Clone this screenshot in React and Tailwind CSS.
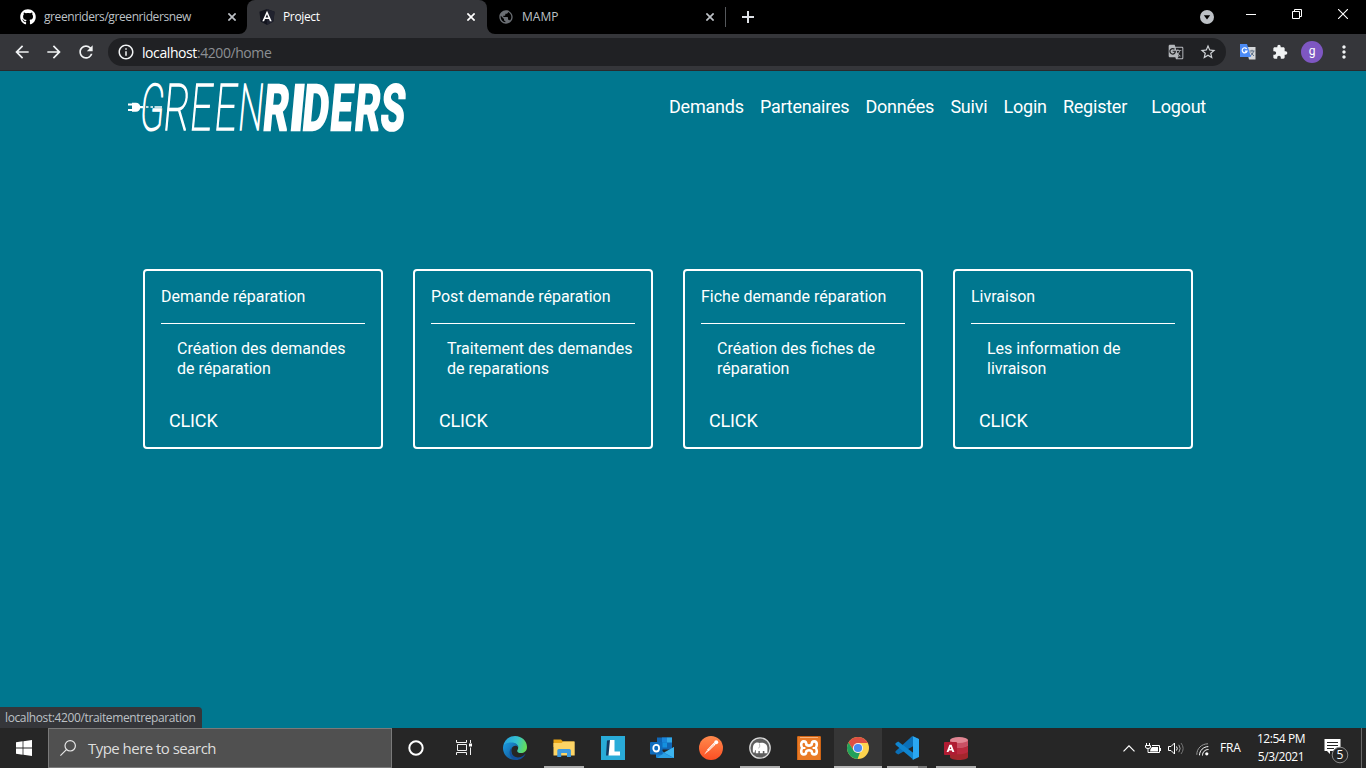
import React from "react";
import {
  MdArrowBack,
  MdArrowForward,
  MdRefresh,
  MdInfoOutline,
  MdStarBorder,
  MdExtension,
  MdMoreVert,
  MdPublic,
  MdGTranslate,
} from "react-icons/md";
import { FaGithub } from "react-icons/fa";

const navLinks = ["Demands", "Partenaires", "Données", "Suivi", "Login", "Register"];

const cards = [
  { title: "Demande réparation", lines: ["Création des demandes", "de réparation"] },
  { title: "Post demande réparation", lines: ["Traitement des demandes", "de reparations"] },
  { title: "Fiche demande réparation", lines: ["Création des fiches de", "réparation"] },
  { title: "Livraison", lines: ["Les information de", "livraison"] },
];

function Cross({ className }) {
  return (
    <svg className={className} width="8" height="8" viewBox="0 0 8 8" stroke="currentColor" strokeWidth="1.7">
      <path d="M0.4 0.4L7.6 7.6M7.6 0.4L0.4 7.6" />
    </svg>
  );
}

function AngularIcon() {
  return (
    <svg width="16" height="16" viewBox="0 0 16 16">
      <path d="M8 0L15.6 2.7L14.4 12.6L8 16L1.6 12.6L0.4 2.7Z" fill="#13151f" />
      <path d="M8 0L15.6 2.7L14.4 12.6L8 16Z" fill="#20222e" />
      <path fillRule="evenodd" d="M8 1.8L3.3 12.3H5.1L6 10H10L10.9 12.3H12.7ZM8 5.2L9.4 8.5H6.6Z" fill="#fff" />
    </svg>
  );
}

function TabStrip() {
  return (
    <div className="flex h-[34px] shrink-0 items-stretch bg-black text-[12px] text-[#bdc1c6]">
      <div className="flex w-[247px] items-center pl-5">
        <FaGithub className="size-4 text-white" />
        <span className="ml-2 w-[184px] tracking-[-0.41px]">greenriders/greenridersnew</span>
        <Cross />
      </div>
      <div className="relative flex w-[240px] items-center rounded-t-lg bg-[#35363a] pl-3 text-white">
        <svg className="absolute -left-2 bottom-0" width="8" height="8"><path d="M8 0V8H0A8 8 0 0 0 8 0" fill="#35363a" /></svg>
        <svg className="absolute -right-2 bottom-0" width="8" height="8"><path d="M0 0V8H8A8 8 0 0 1 0 0" fill="#35363a" /></svg>
        <AngularIcon />
        <span className="ml-2 w-[184px] tracking-[-0.35px]">Project</span>
        <Cross />
      </div>
      <div className="flex w-[238px] items-center pl-[11px]">
        <MdPublic className="size-4 text-[#6b6f74]" />
        <span className="ml-2 w-[184px] tracking-[0.05px]">MAMP</span>
        <Cross />
      </div>
      <div className="my-[7px] w-px bg-[#55585c]" />
      <div className="flex w-[44px] items-center pl-4">
        <svg width="12" height="12" viewBox="0 0 12 12" stroke="#dee1e6" strokeWidth="2"><path d="M6 0V12M0 6H12" /></svg>
      </div>
      <div className="ml-auto flex items-start">
        <svg className="mt-[10px]" width="14" height="14" viewBox="0 0 14 14">
          <circle cx="7" cy="7" r="7" fill="#bdc1c6" />
          <path d="M3.8 5.3H10.2L7 9.5Z" fill="#000" />
        </svg>
        <svg className="ml-8 mt-[9px]" width="10" height="11" stroke="#fff"><path d="M0 5.5H10" /></svg>
        <svg className="ml-9 mt-[9px]" width="10" height="10" fill="none" stroke="#fff">
          <path d="M0.5 2.5H7.5V9.5H0.5ZM2.5 2.5V0.5H9.5V7.5H7.5" />
        </svg>
        <svg className="ml-9 mr-[18px] mt-[9px]" width="10" height="10" stroke="#fff" strokeWidth="1.1"><path d="M0 0L10 10M10 0L0 10" /></svg>
      </div>
    </div>
  );
}

function Toolbar() {
  return (
    <div className="flex h-[37px] shrink-0 items-center border-b border-[#292a2d] bg-[#35363a] text-[#f1f3f4]">
      <MdArrowBack className="ml-3 size-5" />
      <MdArrowForward className="ml-3 size-5" />
      <MdRefresh className="ml-3 size-5" />
      <div className="ml-3 flex h-7 w-[1118px] items-center rounded-full bg-[#202124] pl-[9px] pr-[9px]">
        <MdInfoOutline className="size-[18px]" />
        <span className="ml-[7px] text-[14px] tracking-[-0.42px] text-white">
          localhost<span className="text-[#8c8f93]">:4200/home</span>
        </span>
        <MdGTranslate className="ml-auto size-4 text-[#b4b7bb]" />
        <MdStarBorder className="ml-[15px] size-[18px] text-[#d0d3d7]" />
      </div>
      <svg className="ml-[14px]" width="16" height="16" viewBox="0 0 16 16">
        <path d="M6 3H15.5V15.5H9Z" fill="#d5d7da" />
        <path d="M9.5 7H14.5M12 5.8V7M13.7 7.2Q12.8 10.5 10 12M10.8 8.5L14 12" stroke="#5c6f85" fill="none" />
        <path d="M0 0H7L11 13H0Z" fill="#4c8bf5" />
        <path d="M6.7 4.8A2.5 2.5 0 1 0 7 7.2H4.9" fill="none" stroke="#fff" strokeWidth="1.2" />
      </svg>
      <MdExtension className="ml-4 size-4" />
      <div className="ml-[13px] flex size-[22px] items-center justify-center rounded-full bg-[#7e57c2] font-['Roboto',sans-serif] text-[12px] leading-none text-white">
        <span className="-mt-[2px]">g</span>
      </div>
      <MdMoreVert className="ml-[11px] size-5" />
    </div>
  );
}

const thinLetters = [
  ["G", 140.6, 19.5],
  ["R", 165.7, 20],
  ["E", 192, 17.5],
  ["E", 216.5, 17.5],
  ["N", 240, 18.5],
];
const boldLetters = [
  ["R", 264, 22.5],
  ["I", 291.3, 7.6],
  ["D", 303.5, 22.5],
  ["E", 331, 19.3],
  ["R", 355.5, 22.5],
  ["S", 380.5, 21.5],
];
// Left bearing and ink width of each capital, in em.
const thinInk = { G: [0.063, 0.557], R: [0.093, 0.502], E: [0.093, 0.45], N: [0.093, 0.525] };
const boldInk = { R: [0.06, 0.57], I: [0.065, 0.145], D: [0.06, 0.555], E: [0.06, 0.49], S: [0.035, 0.55] };

function Letter({ ch, x, w, ink, size, baseline, ...rest }) {
  const sx = w / (ink[1] * size);
  const dx = x - 128 - ink[0] * size * sx;
  return (
    <text
      {...rest}
      fontSize={size}
      fill="#fff"
      stroke="#fff"
      transform={`translate(${dx} ${baseline}) skewX(-5.3) scale(${sx} 1)`}
    >
      {ch}
    </text>
  );
}

function Logo() {
  return (
    <svg width="300" height="84" viewBox="0 -16 300 84" className="-my-1.5 shrink-0 font-['Roboto',sans-serif]">
      <path d="M4 21.8H8Q11.5 22 12.2 25H15V27.2H12.2Q11.5 30.6 8 30.8H4ZM0 22.6H4V24.6H0ZM0 28H4V30H0Z" fill="#fff" />
      <path d="M18 26H20.5M22.5 26H25M26.5 26H34" stroke="#fff" strokeWidth="1.6" />
      {thinLetters.map(([ch, x, w], i) => (
        <Letter key={i} ch={ch} x={x} w={w} ink={thinInk[ch]} size={64.5} baseline={48.9} fontWeight="100" strokeWidth="1.7" />
      ))}
      {boldLetters.map(([ch, x, w], i) => (
        <Letter key={i} ch={ch} x={x} w={w} ink={boldInk[ch]} size={63.5} baseline={48.5} fontWeight="700" strokeWidth="2.4" />
      ))}
    </svg>
  );
}

function Page() {
  return (
    <main className="relative flex-1 bg-[#00778f] font-['Roboto',sans-serif] text-white">
      <header className="flex h-[72px] items-center pl-32 pr-[160px]">
        <Logo />
        <nav className="ml-auto flex gap-[16.2px] text-[18px] leading-6 tracking-[-0.23px]">
          {navLinks.map((n) => (
            <a key={n}>{n}</a>
          ))}
          <a className="ml-2">Logout</a>
        </nav>
      </header>
      <section className="mt-[126px] flex gap-[30px] pl-[143px]">
        {cards.map((c) => (
          <article key={c.title} className="flex h-[180px] w-60 flex-col rounded border-2 border-white px-4 pt-4 text-base leading-5">
            <h2 className="h-[37px] w-[204px] border-b border-white">{c.title}</h2>
            <p className="mt-[15px] whitespace-nowrap pl-4">
              {c.lines[0]}
              <br />
              {c.lines[1]}
            </p>
            <a className="mt-[30px] pl-2 text-[18px] leading-6 tracking-[-0.15px]">CLICK</a>
          </article>
        ))}
      </section>
      <div className="absolute bottom-0 left-0 flex h-[21px] w-[202px] items-center whitespace-nowrap rounded-tr bg-[#35363a] pl-[5px] font-['Open_Sans','Noto_Sans',sans-serif] text-[12px] tracking-[-0.38px] text-[#bdc1c6]">
        localhost:4200/traitementreparation
      </div>
    </main>
  );
}

function TaskItem({ children, active, line }) {
  return (
    <div className={active ? "flex w-12 flex-col bg-[#363636]" : "flex w-12 flex-col"}>
      <div className="flex h-[38px] items-center justify-center pt-[2px]">{children}</div>
      {line}
    </div>
  );
}

const underline = <div className="mx-1 h-[2px] bg-[#adadad]" />;

function Edge() {
  return (
    <svg width="24" height="24" viewBox="0 0 24 24">
      <defs>
        <linearGradient id="edgeTop" x1="0" y1="0.3" x2="1" y2="0.5"><stop stopColor="#249fe0" /><stop offset=".55" stopColor="#35c1cf" /><stop offset="1" stopColor="#66df55" /></linearGradient>
        <linearGradient id="edgeLow" x1="0" y1="0" x2="1" y2="1"><stop stopColor="#1b9de2" /><stop offset="1" stopColor="#114a8b" /></linearGradient>
      </defs>
      <path d="M0 11C1 4 6 0 12 0C19 0 24 5 24 11C24 15 21 17 18 17C15 17 13.5 15.5 14.5 14C16.5 11 14 7 9 7C4 7 1 9 0 11Z" fill="url(#edgeTop)" />
      <path d="M0 12C0 8 4 6.4 8.5 6.4C13 6.4 15.5 9 15.5 11.5C14 8.8 9.5 9.5 8.5 13C7.5 18 11 23 15.5 23.5C6 25.5 0 19 0 12Z" fill="url(#edgeLow)" />
      <path d="M9.5 11C6 15 9 21 15 21.5C19 21.5 21.5 18.5 22.8 17.5C20.5 22 17 24 13 24C8 23 5.5 18 7 14Q7.8 12 9.5 11Z" fill="#124f9c" />
    </svg>
  );
}

function Explorer() {
  return (
    <svg width="22" height="19" viewBox="0 0 22 19">
      <path d="M0.5 0.5H8L10 2.5H21V8H0.5Z" fill="#e8a416" />
      <path d="M0.5 4H8.5L10.3 2.5H21.7V16.5H0.5Z" fill="#fdd465" />
      <path d="M4.3 18V11.5Q4.3 10 5.8 10H16.4Q17.9 10 17.9 11.5V18H14V14H8.2V18Z" fill="#3d9ae0" />
    </svg>
  );
}

function LApp() {
  return (
    <svg width="24" height="24" viewBox="0 0 24 24">
      <rect width="24" height="24" fill="#29abd8" />
      <path d="M6 4.5L10 4V15L7.5 19.5H5Z" fill="#123a63" />
      <path d="M9 4H13.5V15.5H19V19.5H7.5Z" fill="#fff" />
    </svg>
  );
}

function Outlook() {
  return (
    <svg width="24" height="22" viewBox="0 0 24 22">
      <rect x="7" y="0.5" width="15" height="12" fill="#1066b5" />
      <rect x="12" y="0.5" width="5" height="5" fill="#1a85d9" />
      <rect x="17" y="0.5" width="5" height="5" fill="#32a9e7" />
      <rect x="12" y="5.5" width="5" height="5" fill="#1490df" />
      <path d="M6 10L15 16L24 10V20.5Q24 21 23 21H7Q6 21 6 20Z" fill="#1a83d3" />
      <path d="M24 10V21L14 15.4Z" fill="#3eb5ef" />
      <path d="M14 16L23 21H7Z" fill="#2ba0e3" />
      <rect y="5" width="12.5" height="12.5" rx="1" fill="#0f6cbd" />
      <ellipse cx="6.2" cy="11.2" rx="2.9" ry="3.3" fill="none" stroke="#fff" strokeWidth="1.8" />
    </svg>
  );
}

function Postman() {
  return (
    <svg width="24" height="24" viewBox="0 0 24 24">
      <defs>
        <linearGradient id="postman" x1="0" y1="0" x2="0" y2="1"><stop stopColor="#ff8a4d" /><stop offset="1" stopColor="#fb4f23" /></linearGradient>
      </defs>
      <circle cx="12" cy="12" r="12" fill="url(#postman)" />
      <circle cx="17.2" cy="6.2" r="2" fill="#fff" />
      <path d="M14.8 6.8L16.6 8.6L9.6 15.2L7.9 13.9Z" fill="#fff" />
      <path d="M8 14.2L9.4 15.3L5 18.7Z" fill="#ffe1d3" />
      <path d="M9.6 13.8L15 8.6" stroke="#ff8658" strokeWidth="0.7" />
    </svg>
  );
}

function Xampp() {
  return (
    <svg width="24" height="24" viewBox="0 0 24 24">
      <rect width="24" height="24" rx="1.5" fill="#e97a26" />
      <path d="M0.5 24V1.5Q0.5 0.5 1.5 0.5H22.5Q23.5 0.5 23.5 1.5V24" fill="none" stroke="#cf6415" />
      <path d="M3 1.5H21" stroke="#f7b27c" />
      <path
        d="M5.6 12Q4.2 11 4.2 8.6Q4.2 5.4 6.8 5.4Q9.2 5.4 9.2 8Q9.4 9.6 12 9.6Q14.6 9.6 14.8 8Q14.8 5.4 17.2 5.4Q19.8 5.4 19.8 8.6Q19.8 11 18.4 12Q19.8 13 19.8 15.2Q19.8 18.4 17.2 18.4Q14.8 18.4 14.8 15.8Q14.6 14.2 12 14.2Q9.4 14.2 9.2 15.8Q9.2 18.4 6.8 18.4Q4.2 18.4 4.2 15.2Q4.2 13 5.6 12Z"
        fill="none"
        stroke="#fff"
        strokeWidth="2.6"
        strokeLinejoin="round"
      />
      <path d="M5.6 12H8.4M15.6 12H18.4" stroke="#fff" strokeWidth="2.2" />
    </svg>
  );
}

function Mamp() {
  return (
    <svg width="22" height="22" viewBox="0 0 22 22">
      <circle cx="11" cy="11" r="10.2" fill="#5e5e5e" stroke="#dadada" strokeWidth="1.3" />
      <path d="M4 15.5C3.4 10.5 4 7 6.8 5.8C8.4 5 9.8 5.5 10.8 6C14.5 5.1 18.4 6.8 18.4 11V16.2H15.4V14H13.8V16.2H10.8V14H9.4V16.2H6.8V13C5.8 13 5.8 14 5.8 15.5Z" fill="#fff" />
      <path d="M10.4 6.4Q11.6 9.5 9.6 11.4" stroke="#8a8a8a" strokeWidth="0.6" fill="none" />
    </svg>
  );
}

function Chrome() {
  return (
    <svg width="22" height="22" viewBox="0 0 22 22">
      <circle cx="11" cy="11" r="11" fill="#fdd34d" />
      <path d="M1.47 5.5A11 11 0 0 1 20.53 5.5L20.8 6H11L6.67 13.5Z" fill="#dd4f43" />
      <path d="M1.47 5.5L6.67 13.5Q9 16.5 13 15.5L10.5 22A11 11 0 0 1 1.47 5.5Z" fill="#22a05b" />
      <circle cx="11" cy="11" r="5.1" fill="#f1f1f1" />
      <circle cx="11" cy="11" r="4.1" fill="#4a8af4" />
    </svg>
  );
}

function Code() {
  return (
    <svg width="24" height="24" viewBox="0 0 24 24">
      <path d="M17 0.3L24 3.2V7L3.2 18.6L0.5 16.8V15.3Z" fill="#0b70b8" />
      <path d="M0.5 7.2L3.2 5.4L18.5 17V23.8L0.5 8.7Z" fill="#1085cf" />
      <path d="M17.5 0L24 3V21L17.5 24Q18 23 18 22V2Q18 1 17.5 0Z" fill="#2aa7f2" />
    </svg>
  );
}

function Access() {
  return (
    <svg width="24" height="23" viewBox="0 0 24 23">
      <path d="M6 3V20C6 24 24 24 24 20V3Z" fill="#a4262c" />
      <path d="M6 3V9.5C10 12 20 12 24 9V3Z" fill="#ca5064" />
      <path d="M6 9V15.5C10 18 20 18 24 15V9C20 12 10 12 6 9Z" fill="#bb2a3e" />
      <ellipse cx="15" cy="3" rx="9" ry="3" fill="#e08592" />
      <rect y="5" width="13" height="13" rx="1" fill="#b01c33" />
      <path fillRule="evenodd" d="M5.4 7.8H7.6L10.4 15H8.4L7.8 13.4H5.1L4.5 15H2.6ZM6.5 9.7L5.6 12H7.3Z" fill="#fff" />
    </svg>
  );
}

function Taskbar() {
  return (
    <footer className="flex h-10 shrink-0 bg-[#262626] text-white">
      <div className="flex w-12 items-center justify-center">
        <svg width="16" height="16" viewBox="0 0 16 16" fill="#fff">
          <path d="M0 2.2L6.6 1.3V7.6H0ZM7.4 1.2L16 0V7.6H7.4ZM0 8.4H6.6V14.7L0 13.8ZM7.4 8.4H16V16L7.4 14.8Z" />
        </svg>
      </div>
      <div className="flex w-[344px] items-center border border-[#7a7a7a] bg-[#505050] pl-[11px]">
        <svg width="16" height="16" viewBox="0 0 16 16" fill="none" stroke="#e8e8e8" strokeWidth="1.2">
          <circle cx="10.2" cy="5.8" r="5.2" />
          <path d="M6.4 9.6L0.4 15.6" />
        </svg>
        <span className="ml-3 text-[15px] tracking-[-0.53px] text-[#dedede]">Type here to search</span>
      </div>
      <TaskItem>
        <svg width="16" height="16"><circle cx="8" cy="8" r="6.7" fill="none" stroke="#fff" strokeWidth="2" /></svg>
      </TaskItem>
      <TaskItem>
        <svg className="-mt-px" width="16" height="15" viewBox="0 0 16 15" fill="none" stroke="#f0f0f0">
          <path d="M0.5 0V2.5H10.5V0M0.5 15V12.5H10.5V15M1.5 4.5H10.5V10.5H1.5ZM14.5 0V3M14.5 7.5V15" />
          <path d="M13 3.5H16V6.5H13Z" fill="#fff" stroke="none" />
        </svg>
      </TaskItem>
      <div className="ml-[3px] flex gap-px">
        <TaskItem><Edge /></TaskItem>
        <TaskItem line={underline}><Explorer /></TaskItem>
        <TaskItem><LApp /></TaskItem>
        <TaskItem><Outlook /></TaskItem>
        <TaskItem><Postman /></TaskItem>
        <TaskItem line={underline}><Mamp /></TaskItem>
        <TaskItem><Xampp /></TaskItem>
        <TaskItem active line={<div className="h-[2px] bg-[#b8b8b8]" />}><Chrome /></TaskItem>
        <TaskItem line={<div className="ml-1 flex h-[2px] w-10"><div className="w-[31px] bg-[#adadad]" /><div className="w-[9px] bg-[#777]" /></div>}><Code /></TaskItem>
        <TaskItem line={underline}><Access /></TaskItem>
      </div>
      <div className="ml-auto flex items-center">
        <svg width="12" height="7" fill="none" stroke="#fff" strokeWidth="1.2"><path d="M0.5 6.3L6 0.8L11.5 6.3" /></svg>
        <svg className="ml-[10px]" width="16" height="11" viewBox="0 0 16 11" fill="none" stroke="#fff">
          <path d="M1.5 0V2M4.5 0V2M0.5 2.5H5.5V4Q5.5 5.5 3 5.5Q0.5 5.5 0.5 4ZM3 5.5V9.5H14.5V2.5H7M15.5 5V8" />
          <path d="M5.5 6L7 4H13V8.5H5Z" fill="#fff" stroke="none" />
        </svg>
        <svg className="ml-[7px]" width="17" height="13" viewBox="0 0 17 13" fill="none" stroke="#fff">
          <path d="M0.5 4.5H3L6.5 1V12L3 8.5H0.5Z" />
          <path d="M8.5 4.5Q10 6.5 8.5 8.5" />
          <path d="M10.8 2.8Q13.5 6.5 10.8 10.2" stroke="#aaa" />
          <path d="M13 1Q17.3 6.5 13 12" stroke="#777" />
        </svg>
        <svg className="ml-[11px] mt-[2px]" width="13" height="13" viewBox="0 0 13 13" fill="none" stroke="#fff">
          <path d="M0.8 11.8C0.8 5.5 5.5 0.8 12 0.8" stroke="#999" />
          <path d="M3.5 12.3C3.5 7.5 7.5 3.6 12.3 3.6" />
          <path d="M6.5 12.5C6.5 9 9 6.5 12.5 6.5" />
          <circle cx="10.8" cy="10.8" r="1.6" fill="#fff" stroke="none" />
        </svg>
        <span className="ml-[11px] w-[36px] text-[12px] tracking-[-0.2px]">FRA</span>
        <div className="w-[50px] whitespace-nowrap text-center text-[12px] leading-[18px] tracking-[-0.45px]">
          12:54 PM
          <br />
          5/3/2021
        </div>
        <svg className="ml-[18px] mt-[5px]" width="26" height="26" viewBox="0 0 26 26">
          <path d="M0.5 1H16.5V13H6V16L3 13H0.5Z" fill="#fff" />
          <path d="M3 4.5H14M3 7.5H14M3 10.5H10" stroke="#262626" />
          <circle cx="16" cy="17" r="7.8" fill="#262626" stroke="#8a8a8a" />
          <text x="16" y="21.4" textAnchor="middle" fontSize="12" fill="#fff">5</text>
        </svg>
        <div className="ml-[11px] mr-1 h-10 w-px bg-[#696969]" />
      </div>
    </footer>
  );
}

export default function App() {
  return (
    <div className="flex h-[768px] w-[1366px] flex-col overflow-hidden bg-black font-['Open_Sans','Noto_Sans',sans-serif]">
      <TabStrip />
      <Toolbar />
      <Page />
      <Taskbar />
    </div>
  );
}
